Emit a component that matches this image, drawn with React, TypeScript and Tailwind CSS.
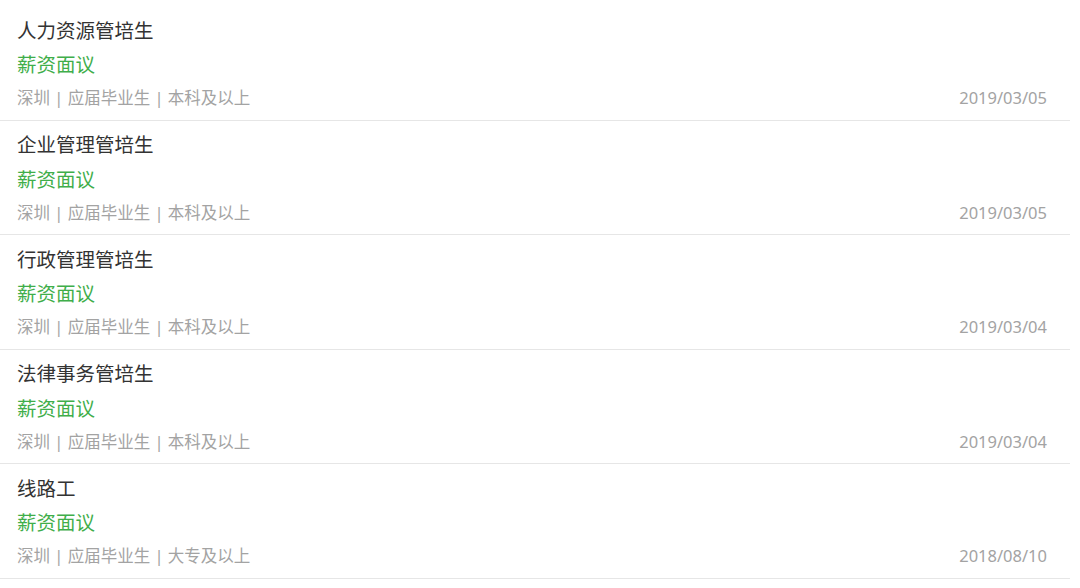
const jobs = [
  { title: "人力资源管培生", edu: "本科及以上", date: "2019/03/05" },
  { title: "企业管理管培生", edu: "本科及以上", date: "2019/03/05" },
  { title: "行政管理管培生", edu: "本科及以上", date: "2019/03/04" },
  { title: "法律事务管培生", edu: "本科及以上", date: "2019/03/04" },
  { title: "线路工", edu: "大专及以上", date: "2018/08/10" },
];

export default function App() {
  return (
    <div
      className="w-[1080px] h-[588px] bg-white pt-[6px] overflow-hidden"
      style={{ fontFamily: '"Noto Sans", "Noto Sans CJK SC", sans-serif' }}
    >
      {jobs.map((job) => (
        <div
          key={job.title}
          className="mr-[10px] h-[114.5px] border-b-[1.5px] border-[#e6e6e6] pl-[17px] pr-[23px] pt-[12.5px] flex flex-col"
        >
          <div className="text-[19.5px] leading-[24px] text-[#333333]">{job.title}</div>
          <div className="mt-[10.5px] text-[19.5px] leading-[24px] text-[#3fae4a]">薪资面议</div>
          <div className="mt-[10px] flex items-center justify-between text-[16.5px] leading-[22px] text-[#a3a3a3]">
            <span>深圳 | 应届毕业生 | {job.edu}</span>
            <span>{job.date}</span>
          </div>
        </div>
      ))}
    </div>
  );
}
